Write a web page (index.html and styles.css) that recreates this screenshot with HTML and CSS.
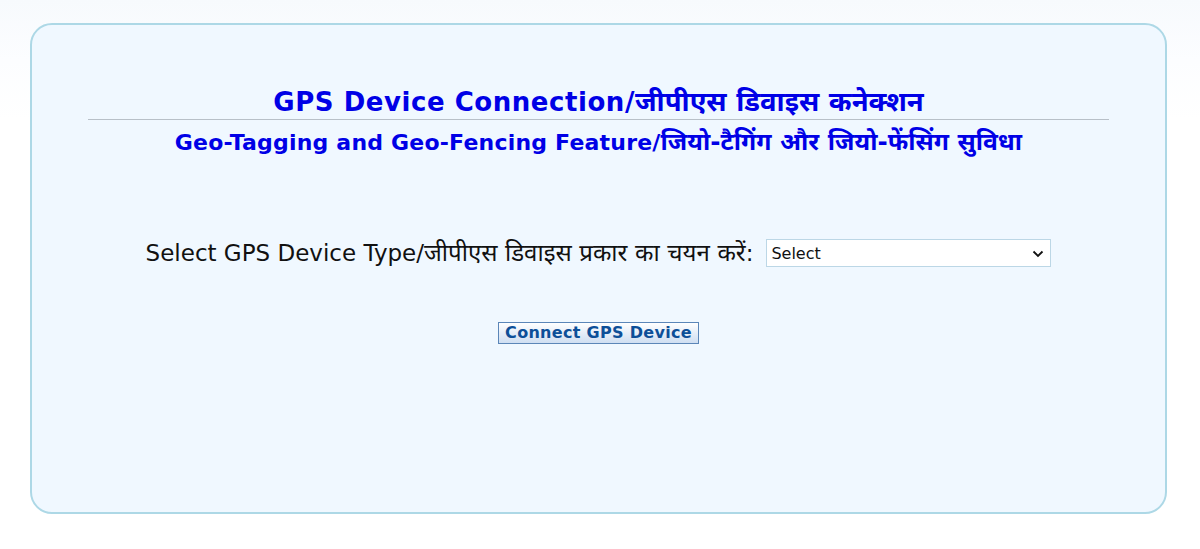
FILE: index.html
```html
<!DOCTYPE html>
<html lang="en">
<head>
<meta charset="utf-8">
<title>GPS Device Connection</title>
<link rel="stylesheet" href="styles.css">
</head>
<body>
<div class="page">
  <div class="card">
    <h1 class="title">GPS Device Connection/<span class="hi">जीपीएस डिवाइस कनेक्शन</span></h1>
    <hr class="rule">
    <h2 class="subtitle">Geo-Tagging and Geo-Fencing Feature/<span class="hi">जियो-टैगिंग और जियो-फेंसिंग सुविधा</span></h2>
    <div class="field">
      <label class="label" for="dtype">Select GPS Device Type/<span class="hi">जीपीएस डिवाइस प्रकार का चयन करें</span>:</label>
      <div class="select-box">
        <select id="dtype" class="select">
          <option>Select</option>
        </select>
        <svg class="chev" width="12" height="8" viewBox="0 0 12 8"><path d="M1.5 1.5 L6 6 L10.5 1.5" fill="none" stroke="#111" stroke-width="1.8"/></svg>
      </div>
    </div>
    <div class="actions">
      <button class="btn" type="button">Connect GPS Device</button>
    </div>
  </div>
</div>
</body>
</html>
```

FILE: styles.css
```css
html, body {
  margin: 0;
  padding: 0;
}
body {
  background: linear-gradient(#f7fafd 0, #fcfdff 60px, #ffffff 120px);
  font-family: "DejaVu Sans", Verdana, "Noto Sans", sans-serif;
  height: 549px;
  overflow: hidden;
}
.page {
  padding: 23px 33px 0 30px;
}
.card {
  box-sizing: border-box;
  height: 491px;
  border: 2px solid #add8e6;
  border-radius: 22px;
  background: #f0f8ff;
  padding: 60px 56px 0 56px;
}
.title {
  margin: 0;
  text-align: center;
  font-size: 26px;
  letter-spacing: 0.55px;
  line-height: 32px;
  font-weight: bold;
  color: #0000e6;
  white-space: nowrap;
}
.title .hi {
  font-size: 27.5px;
  letter-spacing: 0;
}
.rule {
  margin: 1px 0 0 0;
  border: 0;
  border-top: 1px solid #b8c0c8;
  height: 0;
}
.subtitle {
  margin: 7px 0 0 0;
  text-align: center;
  font-size: 22px;
  letter-spacing: 0.2px;
  line-height: 30px;
  font-weight: bold;
  color: #0000e6;
  white-space: nowrap;
}
.subtitle .hi {
  font-size: 24.7px;
  letter-spacing: 0;
}
.field {
  margin-top: 81px;
  display: flex;
  justify-content: center;
  align-items: center;
  gap: 13px;
}
.label {
  font-size: 23px;
  color: #111;
  line-height: 28px;
  white-space: nowrap;
}
.label .hi {
  font-size: 24px;
}
.select-box {
  position: relative;
  width: 285px;
  height: 28px;
  flex: none;
}
.select {
  appearance: none;
  -webkit-appearance: none;
  box-sizing: border-box;
  width: 100%;
  height: 100%;
  border: 1px solid #bcd7e6;
  background: #ffffff;
  font-family: "DejaVu Sans", Verdana, sans-serif;
  font-size: 16px;
  color: #111;
  padding: 0 0 0 4px;
  border-radius: 0;
}
.chev {
  position: absolute;
  right: 7px;
  top: 11px;
  pointer-events: none;
}
.actions {
  margin-top: 55px;
  display: flex;
  justify-content: center;
}
.btn {
  box-sizing: border-box;
  width: 201px;
  height: 22px;
  padding: 0;
  border: 1px solid #5b86b8;
  background: linear-gradient(#ffffff, #e6eef8 50%, #cfdff2);
  color: #0d4f98;
  font-family: "DejaVu Sans", Verdana, sans-serif;
  font-weight: bold;
  font-size: 16px;
  letter-spacing: 0.3px;
  line-height: 20px;
}
```
